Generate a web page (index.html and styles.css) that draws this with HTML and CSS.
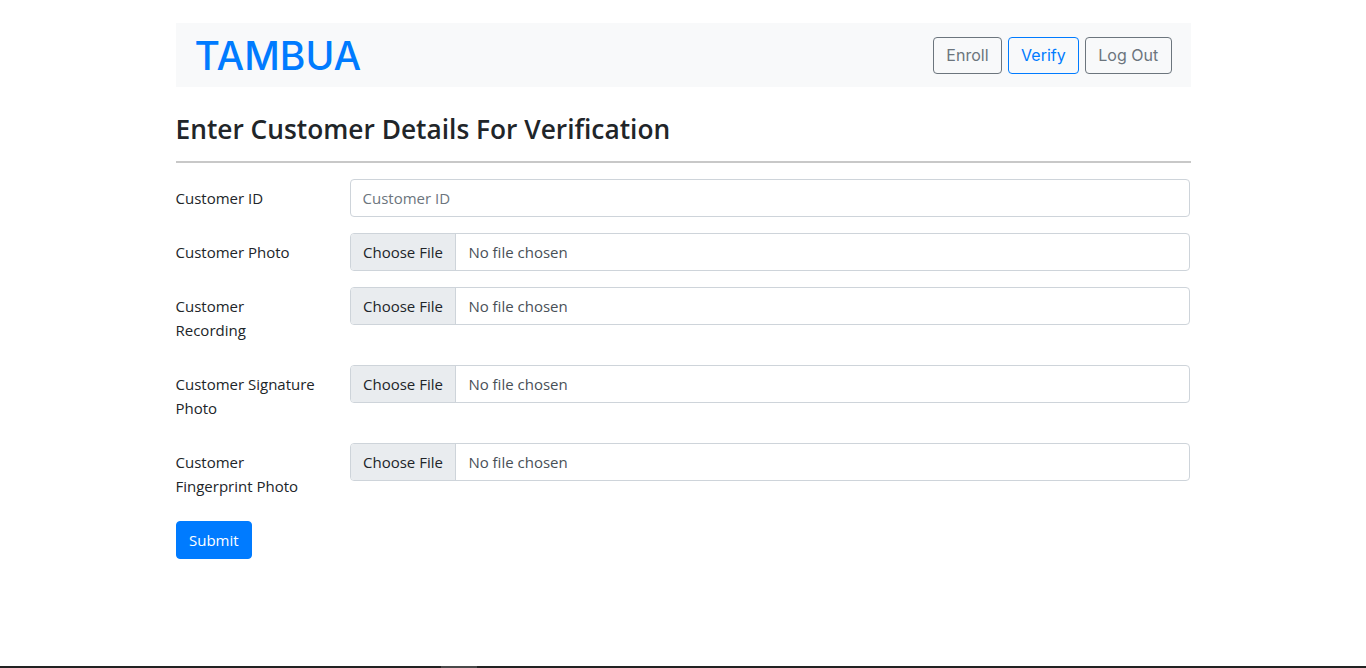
FILE: index.html
```html
<!DOCTYPE html>
<html lang="en">
<head>
<meta charset="utf-8">
<title>TAMBUA - Verify</title>
<link rel="stylesheet" href="styles.css">
</head>
<body>
<div class="page">
  <nav class="navbar">
    <a class="brand" href="#">TAMBUA</a>
    <div class="nav-actions">
      <a class="nav-btn" href="#">Enroll</a>
      <a class="nav-btn active" href="#">Verify</a>
      <a class="nav-btn" href="#">Log Out</a>
    </div>
  </nav>

  <h3 class="title">Enter Customer Details For Verification</h3>
  <hr class="rule">

  <form class="form">
    <div class="row">
      <label class="label" for="cid">Customer ID</label>
      <div class="field"><input class="control" id="cid" type="text" placeholder="Customer ID"></div>
    </div>
    <div class="row">
      <label class="label" for="photo">Customer Photo</label>
      <div class="field"><input class="control file" id="photo" type="file"></div>
    </div>
    <div class="row">
      <label class="label" for="rec">Customer<br>Recording</label>
      <div class="field"><input class="control file" id="rec" type="file"></div>
    </div>
    <div class="row">
      <label class="label" for="sig">Customer Signature<br>Photo</label>
      <div class="field"><input class="control file" id="sig" type="file"></div>
    </div>
    <div class="row">
      <label class="label" for="fp">Customer<br>Fingerprint Photo</label>
      <div class="field"><input class="control file" id="fp" type="file"></div>
    </div>
    <button class="submit" type="submit">Submit</button>
  </form>
</div>
<div class="bottom-bar"><span class="thumb"></span></div>
</body>
</html>
```

FILE: styles.css
```css
* { box-sizing: border-box; }
html, body { height: 100%; }
body {
  margin: 0;
  font-family: "Open Sans", "Noto Sans", "Liberation Sans", sans-serif;
  font-size: 15px;
  color: #212529;
  background: #fff;
  position: relative;
  overflow: hidden;
}
.page {
  width: 1015px;
  margin: 23px auto 0;
}
.navbar {
  height: 64px;
  background: #f8f9fa;
  display: flex;
  align-items: center;
  justify-content: space-between;
  padding: 0 19px 0 19px;
}
.brand {
  font-family: Inter, "Noto Sans", sans-serif;
  font-weight: 500;
  font-size: 39px;
  letter-spacing: 0;
  color: #007bff;
  text-decoration: none;
  line-height: 1;
}
.nav-actions {
  display: flex;
  gap: 6px;
}
.nav-btn {
  display: block;
  height: 37px;
  line-height: 35px;
  padding: 0 12.3px;
  border: 1px solid #6c757d;
  border-radius: 4px;
  color: #6c757d;
  text-decoration: none;
  font-family: Inter, "Noto Sans", sans-serif;
  font-size: 16px;
}
.nav-btn.active {
  border-color: #007bff;
  color: #007bff;
}
.title {
  margin: 24px 0 0;
  font-size: 26.3px;
  font-weight: 600;
  line-height: 36px;
  letter-spacing: 0;
}
.rule {
  margin: 14px 0 16px;
  border: 0;
  border-top: 2px solid #c8c8c8;
  height: 0;
}
.form { margin: 0; }
.row {
  display: flex;
  margin-bottom: 16px;
}
.label {
  width: 174px;
  flex: none;
  padding: 7px 30px 7px 0;
  line-height: 24px;
  font-size: 15px;
}
.field { flex: 1; margin-right: 1px; }
.control {
  display: block;
  width: 100%;
  height: 38px;
  padding: 6px 12px;
  border: 1px solid #ced4da;
  border-radius: 4px;
  font-family: inherit;
  font-size: 15px;
  line-height: 24px;
  color: #495057;
  background: #fff;
}
.control::placeholder { color: #6c757d; }
.control.file {
  padding: 0;
  overflow: hidden;
}
.control.file::file-selector-button {
  height: 36px;
  margin: 0 12px 0 0;
  padding: 0 12.5px;
  border: 0;
  border-right: 1px solid #ced4da;
  border-radius: 0;
  background: #e9ecef;
  color: #212529;
  font-family: inherit;
  font-size: 15px;
}
.submit {
  display: block;
  height: 38px;
  padding: 0 12.5px;
  border: 1px solid #007bff;
  border-radius: 4px;
  background: #007bff;
  color: #fff;
  font-family: inherit;
  font-size: 15px;
  line-height: 36px;
}
.bottom-bar {
  position: absolute;
  left: 0;
  right: 0;
  bottom: 0;
  height: 2px;
  background: #222;
}
.thumb {
  position: absolute;
  left: 441px;
  width: 36px;
  top: 0;
  bottom: 0;
  background: #4a4a4a;
}
```
